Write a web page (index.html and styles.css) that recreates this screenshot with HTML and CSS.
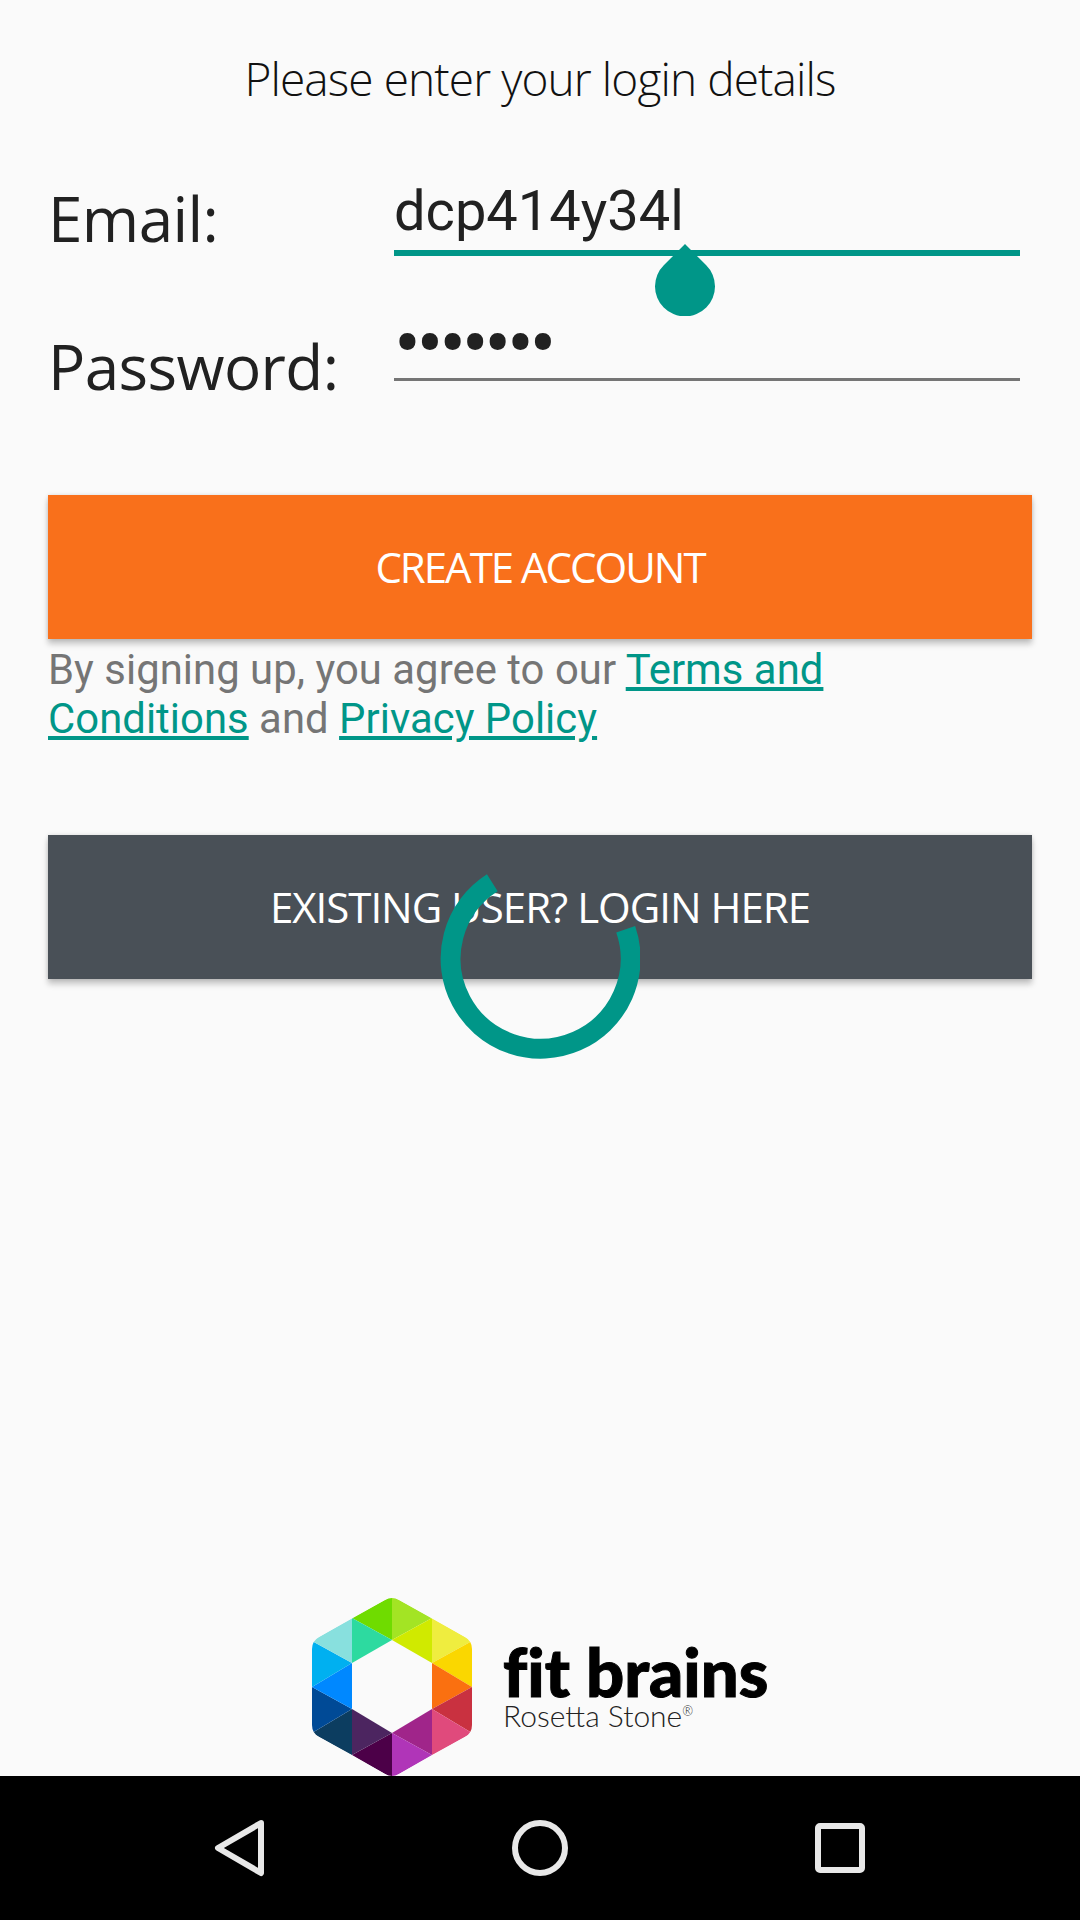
FILE: index.html
```html
<!DOCTYPE html>
<html lang="en">
<head>
<meta charset="utf-8">
<title>Login</title>
<link rel="stylesheet" href="styles.css">
</head>
<body>
<div class="screen">
  <main class="main">
    <h1 class="title">Please enter your login details</h1>
    <form class="form">
      <div class="row row-email">
        <div class="label">Email:</div>
        <div class="field field-active">dcp414y34l</div>
      </div>
      <div class="row row-password">
        <div class="label">Password:</div>
        <div class="field field-dots">•••••••</div>
      </div>
    </form>
    <div class="btn btn-orange">CREATE ACCOUNT</div>
    <p class="terms">By signing up, you agree to our <a class="link">Terms and Conditions</a> and <a class="link">Privacy Policy</a></p>
    <div class="btn btn-dark">EXISTING USER? LOGIN HERE</div>
    <div class="brand">
      <svg class="hex" width="160" height="180" viewBox="312 1596 160 180">
        <defs><clipPath id="hexclip"><path d="M385 1600Q392 1596 399 1600L465 1637Q472 1641 472 1649V1725Q472 1733 465 1737L399 1774Q392 1778 385 1774L319 1737Q312 1733 312 1725V1649Q312 1641 319 1637Z"/></clipPath></defs>
        <g clip-path="url(#hexclip)">
          <polygon fill="#6fdc00" points="392,1596 352,1618 392,1640"/>
          <polygon fill="#a3e424" points="392,1596 432,1618 392,1640"/>
          <polygon fill="#d0ea00" points="392,1640 432,1618 432,1663"/>
          <polygon fill="#efed3f" points="432,1618 472,1641 432,1663"/>
          <polygon fill="#fad700" points="472,1641 472,1687 432,1663"/>
          <polygon fill="#fa7010" points="432,1663 472,1687 432,1709"/>
          <polygon fill="#c93140" points="472,1687 472,1733 432,1709"/>
          <polygon fill="#e04a7c" points="472,1733 432,1755 432,1709"/>
          <polygon fill="#a0258a" points="432,1709 432,1755 392,1733"/>
          <polygon fill="#b035b8" points="392,1733 432,1755 392,1778"/>
          <polygon fill="#4c0048" points="392,1733 392,1778 352,1755"/>
          <polygon fill="#4c2560" points="392,1733 352,1755 352,1709"/>
          <polygon fill="#0c3d60" points="352,1709 352,1755 312,1733"/>
          <polygon fill="#004a96" points="352,1709 312,1733 312,1687"/>
          <polygon fill="#0088ff" points="352,1663 312,1687 352,1709"/>
          <polygon fill="#00b0f0" points="312,1687 312,1641 352,1663"/>
          <polygon fill="#88e0de" points="312,1641 352,1618 352,1663"/>
          <polygon fill="#2ddaa0" points="352,1618 392,1640 352,1663"/>
        </g>
      </svg>
      <div class="wordmark">
        <div class="wm-main">fit brains</div>
        <div class="wm-sub">Rosetta Stone<sup class="wm-reg">®</sup></div>
      </div>
    </div>
  </main>
  <nav class="nav">
    <svg class="nav-icon" width="56" height="60" viewBox="0 0 56 60"><path d="M49 5 L6 30 L49 55 Z" fill="none" stroke="#e8e8e8" stroke-width="6" stroke-linejoin="round"/></svg>
    <svg class="nav-icon" width="56" height="60" viewBox="0 0 56 60"><circle cx="28" cy="30" r="25" fill="none" stroke="#e8e8e8" stroke-width="6"/></svg>
    <svg class="nav-icon" width="56" height="60" viewBox="0 0 56 60"><rect x="6" y="8" width="44" height="44" rx="2" fill="none" stroke="#e8e8e8" stroke-width="6"/></svg>
  </nav>
  <svg class="handle" width="60" height="72" viewBox="0 0 60 72"><path d="M30 0L9 21A30 30 0 1 0 51 21Z" fill="#009688"/></svg>
  <svg class="spinner" width="200" height="200" viewBox="440 859 200 200"><path d="M625.7 929.3A90 90 0 1 1 492.3 882.7" fill="none" stroke="#009688" stroke-width="20"/></svg>
</div>
</body>
</html>
```
FILE: styles.css
```css
* { box-sizing: border-box; }
html, body { margin: 0; padding: 0; }
body { background: #fafafa; font-family: "Open Sans", sans-serif; }
.screen { position: relative; width: 1080px; height: 1920px; display: flex; flex-direction: column; overflow: hidden; }
.main { flex: 1; min-height: 0; padding: 48px 48px 0; display: flex; flex-direction: column; }
.title { margin: 0; height: 60px; font-family: "Open Sans", sans-serif; font-weight: 300; font-size: 46px; line-height: 60px; text-align: center; color: #111; letter-spacing: -0.9px; white-space: nowrap; }
.form { margin-top: 60px; display: flex; flex-direction: column; }
.row { display: grid; grid-template-columns: 346px 626px; }
.row-email { height: 88px; }
.row-password { height: 125px; margin-top: 40px; }
.label { font-family: "Open Sans", sans-serif; font-size: 62px; line-height: 80px; color: #212121; letter-spacing: -0.6px; padding-top: 10px; }
.row-password .label { padding-top: 30px; }
.field { font-family: "Roboto", sans-serif; font-size: 56px; line-height: 70px; color: #212121; height: 85px; border-bottom: 3px solid #757575; }
.field-active { height: 88px; border-bottom: 6px solid #009688; padding-top: 8px; }
.field-dots { font-size: 80px; letter-spacing: -4.4px; padding-top: 13px; }
.btn { height: 144px; padding-bottom: 2px; display: flex; align-items: center; justify-content: center; color: #fff; font-size: 42px; letter-spacing: -2px; box-shadow: 0 5px 6px rgba(0,0,0,.22), 0 0 4px rgba(0,0,0,.12); flex: none; }
.btn-orange { margin-top: 74px; background: #f9701b; }
.btn-dark { margin-top: 92px; background: #495057; letter-spacing: -1px; }
.terms { margin: 6px 0 0; padding-right: 10px; font-family: "Roboto", sans-serif; font-size: 41.8px; letter-spacing: 0.05px; line-height: 49px; color: #757575; height: 98px; }
.link { color: #009688; text-decoration: underline; }
.brand { margin-top: auto; display: flex; align-items: flex-start; padding-left: 264px; height: 180px; flex: none; }
.hex { flex: none; display: block; }
.wordmark { margin-left: 31px; padding-top: 37px; display: flex; flex-direction: column; }
.wm-main { font-family: "Lato", sans-serif; font-weight: 900; font-size: 67px; line-height: 76px; color: #000; white-space: nowrap; font-variant-ligatures: none; -webkit-text-stroke: 1px #000; }
.wm-sub { font-family: "Lato", sans-serif; font-weight: 300; font-size: 30px; line-height: 30px; margin-top: -9px; color: #222; white-space: nowrap; }
.wm-reg { font-size: 13px; line-height: 0; }
.nav { flex: none; height: 144px; background: #000; position: relative; display: flex; justify-content: space-between; align-items: center; padding: 0 212px 0 212px; }
.handle { position: absolute; left: 655px; top: 244px; }
.spinner { position: absolute; left: 440px; top: 859px; }
```
